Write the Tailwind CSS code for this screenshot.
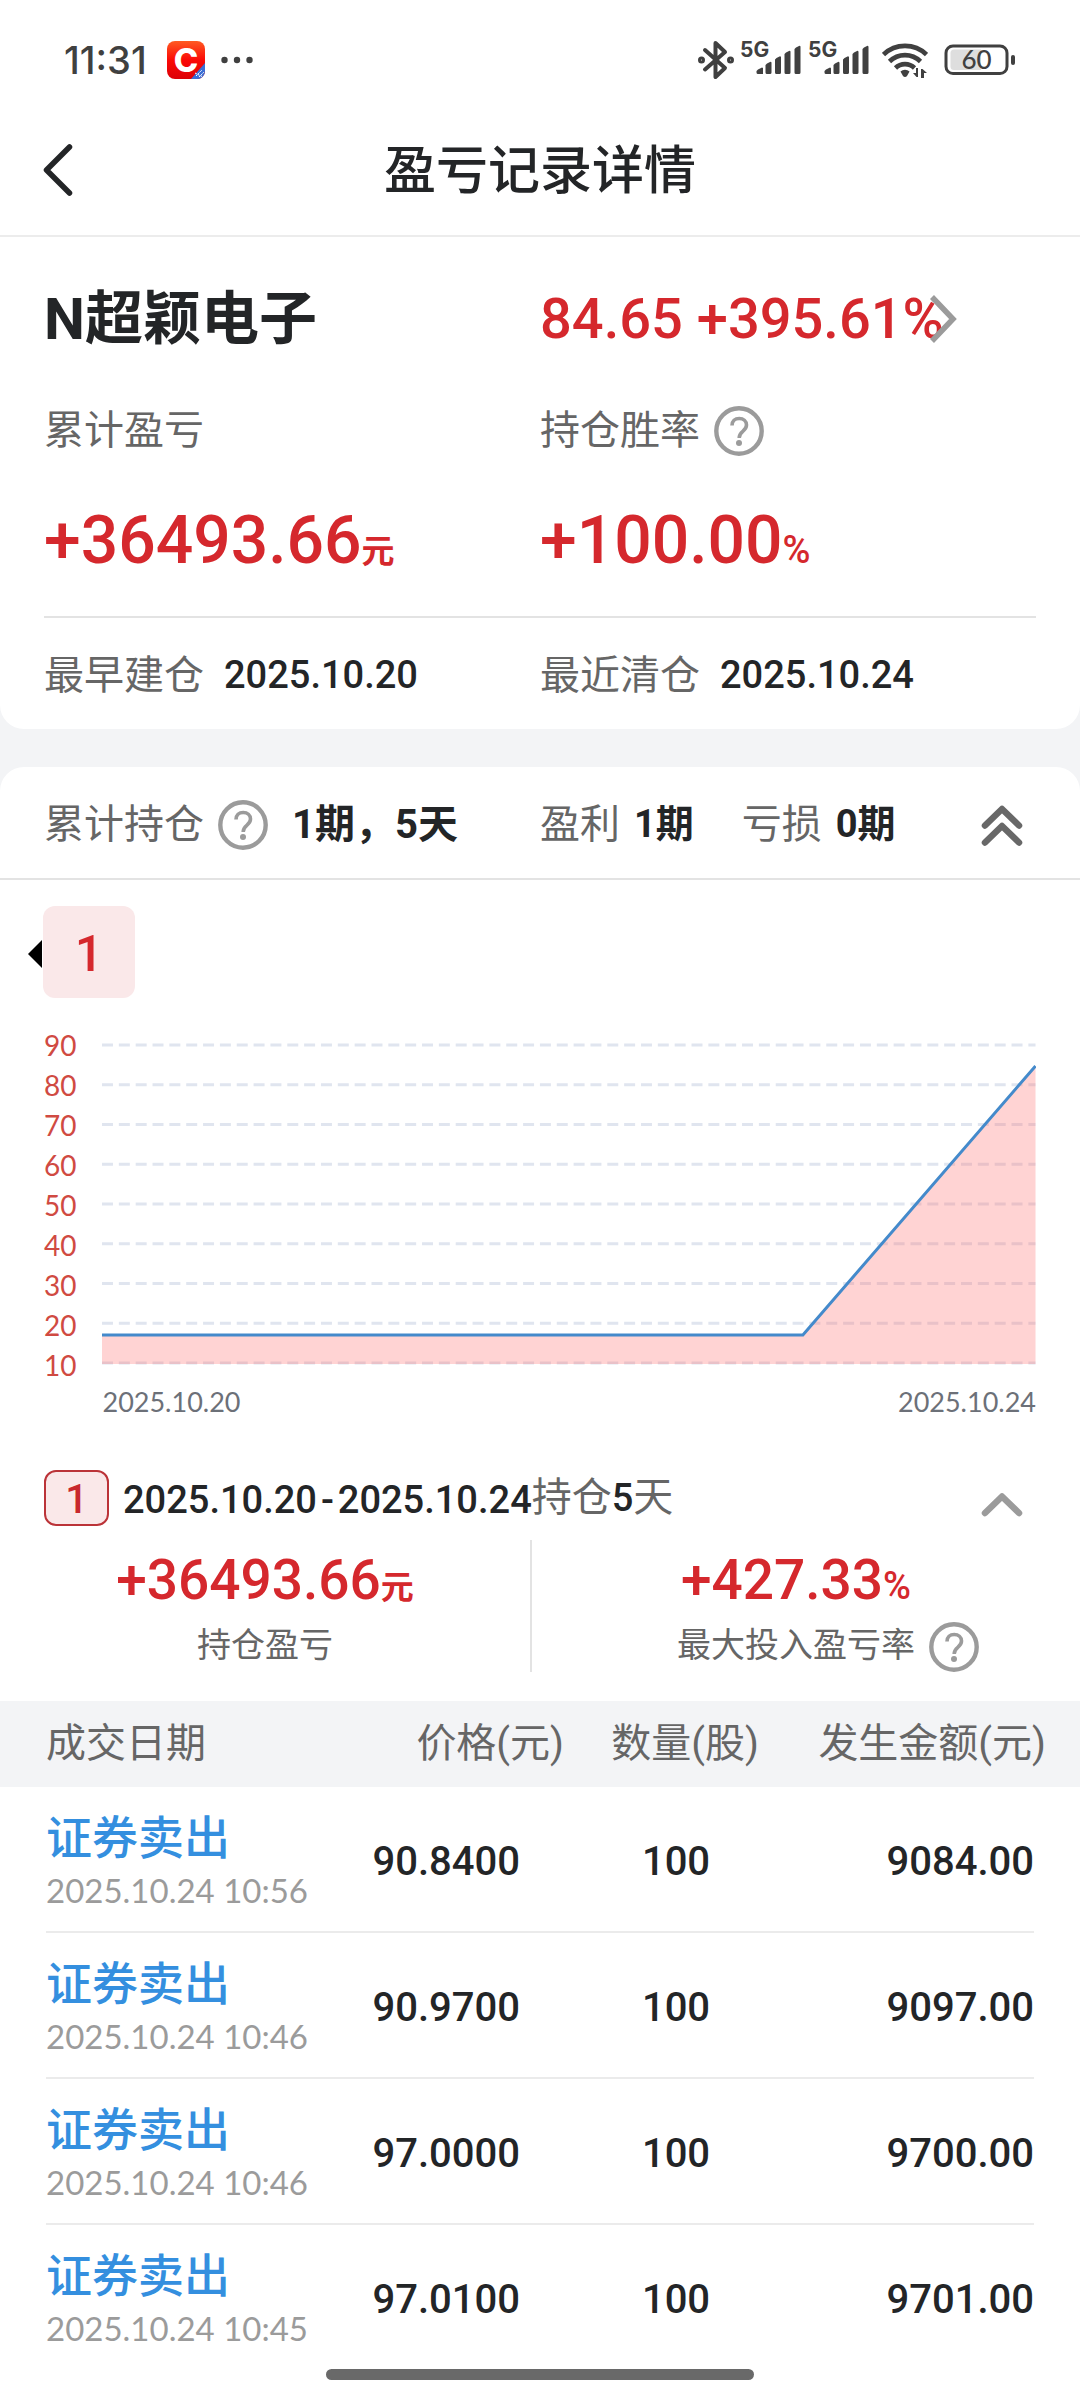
<!DOCTYPE html>
<html lang="zh-CN">
<head>
  <meta charset="UTF-8" />
  <meta name="viewport" content="width=device-width, initial-scale=1.0" />
  <title>盈亏记录详情</title>
  <script src="https://cdn.jsdelivr.net/npm/@tailwindcss/browser@4"></script>
</head>
<body class="bg-[#f3f4f6] font-['Roboto','Noto_Sans_CJK_SC',sans-serif] text-[#232527] whitespace-nowrap">
  <svg class="hidden">
    <symbol id="help" viewBox="0 0 50 50">
      <circle cx="25" cy="25" r="22.7" fill="none" stroke="#9b9b9b" stroke-width="4.4" />
      <path d="M18 19.500c0-4.300 3-7 7.200-7s7.300 2.700 7.300 6.600c0 3-1.600 4.500-3.700 6.200-2.400 1.900-3.600 3.200-3.600 6.700" fill="none" stroke="#9b9b9b" stroke-width="3.600" />
      <circle cx="25" cy="37" r="3" fill="#9b9b9b" />
    </symbol>
    <symbol id="signal" viewBox="0 0 46 30">
      <path d="M2 24.500l3.500-1.800a1 1 0 0 1 1.500 1V29H2a1.500 1.500 0 0 1-1.500-1.500V26zM11 18.500l3-1.500a1 1 0 0 1 1.500 1v9.500A1.500 1.500 0 0 1 14 29h-3a1.500 1.500 0 0 1-1.500-1.500V20zM20.500 13l3-1.500a1 1 0 0 1 1.500 1v15a1.500 1.500 0 0 1-1.500 1.500h-3a1.500 1.500 0 0 1-1.500-1.500v-13zM30 7.500L33 6a1 1 0 0 1 1.500 1v20.500A1.500 1.500 0 0 1 33 29h-3a1.500 1.500 0 0 1-1.500-1.500V9zM40 2.500L43 1a1 1 0 0 1 1.500 1v25.500A1.500 1.500 0 0 1 43 29h-3a1.500 1.500 0 0 1-1.500-1.500V4z" fill="#404040" />
    </symbol>
  </svg>

  <div class="bg-white rounded-b-3xl">
    <!-- status bar -->
    <div class="h-[104px] pt-4 pl-16 pr-16 flex items-center justify-between text-[#404040]">
      <div class="flex items-center">
        <span class="font-['Inter'] text-[38px] font-medium">11:31</span>
        <svg class="ml-5 w-[38px] h-[38px]" viewBox="0 0 38 38">
          <defs>
            <linearGradient id="app" x1="0" y1="0" x2="0" y2="1">
              <stop offset="0" stop-color="#ff5a22" /><stop offset=".5" stop-color="#fb0a06" /><stop offset="1" stop-color="#dc0008" />
            </linearGradient>
            <clipPath id="appClip"><rect width="38" height="38" rx="8" /></clipPath>
          </defs>
          <g clip-path="url(#appClip)">
            <rect width="38" height="38" fill="url(#app)" />
            <path d="M38 22L24 38h14z" fill="#3b6fd6" />
            <path d="M29 35l6-6M32 36l5-5M28 32l8 4" stroke="#fff" stroke-dasharray="2 1" />
            <text x="19" y="31" text-anchor="middle" font-family="Inter" font-weight="800" font-size="33" fill="#fff">C</text>
          </g>
        </svg>
        <svg class="ml-4 w-8 h-2" viewBox="0 0 32 8" fill="#404040"><circle cx="3.500" cy="4" r="3.200" /><circle cx="16" cy="4" r="3.200" /><circle cx="28.500" cy="4" r="3.200" /></svg>
      </div>
      <div class="flex items-center">
        <svg class="w-9 h-10" viewBox="0 0 36 40" fill="none" stroke="#404040" stroke-width="4" stroke-linejoin="round" stroke-linecap="round">
          <path d="M7 10l20 18-9.500 9V3L27 12 7 29.500" />
          <circle cx="3.500" cy="20" r="1.500" /><circle cx="32.500" cy="20" r="1.500" />
        </svg>
        <span class="ml-1.5 -mt-5 w-4 font-['Inter'] text-[21px] leading-5 font-bold">5G</span>
        <svg class="w-[46px] h-[30px]"><use href="#signal" /></svg>
        <span class="ml-1.5 -mt-5 w-4 font-['Inter'] text-[21px] leading-5 font-bold">5G</span>
        <svg class="w-[46px] h-[30px]"><use href="#signal" /></svg>
        <svg class="ml-3 w-[46px] h-9" viewBox="0 0 46 36">
          <g fill="none" stroke="#404040" stroke-width="4.600">
            <path d="M1.500 12.500a31 31 0 0 1 43 0M7.500 19.500a22 22 0 0 1 31 0M13.500 26a13.500 13.500 0 0 1 19 0" />
          </g>
          <path d="M18.500 29.500a6.500 6.500 0 0 1 9 0l-2.500 4.500a2.500 2.500 0 0 1-4 0z" fill="#404040" />
          <path d="M36 26v9h-1.500l-3.500-4h3v-5zM39 36v-9h1.500l4.500 4h-3v5z" fill="#404040" />
        </svg>
        <svg class="ml-4 w-[72px] h-8" viewBox="0 0 72 32">
          <rect x="2" y="2" width="61" height="27.500" rx="7" fill="#fff" stroke="#404040" stroke-width="3" />
          <path d="M10 5.500h27v20.500H10a3.500 3.500 0 0 1-3.500-3.500V9A3.500 3.500 0 0 1 10 5.500z" fill="#dedede" />
          <rect x="67" y="11" width="4" height="10" rx="2" fill="#404040" />
          <text x="32.500" y="25" text-anchor="middle" font-family="Lato" font-weight="500" font-size="26" fill="#404040">60</text>
        </svg>
      </div>
    </div>

    <header class="relative h-[133px] border-b-2 border-[#ececec] flex items-center justify-center">
      <button class="absolute left-9 p-1" aria-label="返回">
        <svg class="w-9 h-14" viewBox="0 0 36 56" fill="none" stroke="#232527" stroke-width="5.500" stroke-linecap="round" stroke-linejoin="round"><path d="M29.500 5L6.500 28l23 23" /></svg>
      </button>
      <h1 class="pt-1 text-[52px] font-medium">盈亏记录详情</h1>
    </header>

    <section class="px-11 pt-5">
      <div class="grid grid-cols-2 h-[120px] pt-1 items-center">
        <h2 class="text-[58px] font-bold">N超颖电子</h2>
        <a href="#" class="flex items-center text-[56px] font-medium text-[#d5282d]">84.65 +395.61%
          <svg class="-ml-4 w-8 h-12" viewBox="0 0 32 48" fill="none" stroke="#9b9b9b" stroke-width="5.500"><path d="M4 2l21 22L4 46" /></svg>
        </a>
      </div>
      <div class="grid grid-cols-2 h-[108px] items-center text-[40px] text-[#666]">
        <span>累计盈亏</span>
        <span class="flex items-center gap-3.5">持仓胜率
          <button aria-label="持仓胜率说明"><svg class="block size-[50px]"><use href="#help" /></svg></button>
        </span>
      </div>
      <div class="grid grid-cols-2 h-[106px] pt-1 items-center text-[66px] font-medium text-[#d5282d]">
        <p>+36493.66<span class="text-[33px] font-bold">元</span></p>
        <p>+100.00<span class="text-[38px]">%</span></p>
      </div>
      <div class="grid grid-cols-2 mt-[25px] h-[113px] pt-1 items-center border-t-2 border-[#e3e3e3]">
        <p class="flex items-center gap-5"><span class="text-[40px] text-[#666]">最早建仓</span><span class="text-[38px] font-medium">2025.10.20</span></p>
        <p class="flex items-center gap-5"><span class="text-[40px] text-[#666]">最近清仓</span><span class="text-[38px] font-medium">2025.10.24</span></p>
      </div>
    </section>
  </div>

  <div class="mt-[38px] bg-white rounded-t-3xl pb-[30px]">
    <div class="h-[113px] px-11 pt-1 border-b-2 border-[#e3e3e3] grid grid-cols-2 items-center text-[40px] text-[#666]">
      <div class="flex items-center">累计持仓
        <button class="ml-3.5" aria-label="累计持仓说明"><svg class="block size-[50px]"><use href="#help" /></svg></button>
        <b class="ml-6 font-bold text-[#232527]">1期，5天</b>
      </div>
      <div class="flex items-center">
        <span>盈利</span><b class="ml-3.5 text-[38px] text-[#232527]">1期</b>
        <span class="ml-12">亏损</span><b class="ml-3.5 text-[38px] text-[#232527]">0期</b>
        <button class="ml-auto mr-3" aria-label="全部收起">
          <svg class="block w-[44px] h-[44px]" viewBox="0 0 44 44" fill="none" stroke="#686868" stroke-width="6.500" stroke-linecap="round" stroke-linejoin="round"><path d="M5 22.500L22 6l17 16.500M5 39.500L22 23l17 16.500" /></svg>
        </button>
      </div>
    </div>

    <div class="mt-[26px] pl-7 flex items-center">
      <svg class="w-[15px] h-7 mt-1" viewBox="0 0 15 28"><path d="M0 14L14 0v28z" /></svg>
      <button class="w-[92px] h-[92px] pt-1 rounded-xl bg-[#fae8e9] text-[50px] font-medium text-[#d5282d]">1</button>
    </div>

    <!-- price chart -->
    <div class="mt-7 px-11 flex gap-[26px]">
      <div class="h-[358px] flex flex-col justify-between text-right font-['Lato'] text-[28px] leading-[38px] text-[#d04a42]">
        <span>90</span><span>80</span><span>70</span><span>60</span><span>50</span><span>40</span><span>30</span><span>20</span><span>10</span>
      </div>
      <div class="flex-1">
        <svg class="block w-full h-[358px]" viewBox="0 0 935 358" preserveAspectRatio="none">
          <path d="M0 19H935M0 58.750H935M0 98.500H935M0 138.250H935M0 178H935M0 217.750H935M0 257.500H935M0 297.250H935M0 337H935" stroke="#e0e5ef" stroke-width="3" stroke-dasharray="11 5.870" />
          <path d="M0 309H702L935 40V338H0z" fill="#ff6e6e" fill-opacity=".3" />
          <path d="M0 309H702L935 40" fill="none" stroke="#448acb" stroke-width="3" />
        </svg>
        <div class="h-9 flex justify-between items-center font-['Lato'] text-[27px] text-[#6c7078]">
          <span>2025.10.20</span><span>2025.10.24</span>
        </div>
      </div>
    </div>

    <div class="mt-12 h-[60px] px-11 flex items-center text-[38px]">
      <span class="w-[65px] h-[56px] pt-1 rounded-xl border-2 border-[#bb3338] bg-[#fae8e9] flex items-center justify-center text-[40px] font-medium text-[#c8282d]">1</span>
      <span class="ml-3.5 pt-1 font-medium">2025.10.20<span class="px-1">-</span>2025.10.24</span>
      <span class="text-[40px] text-[#666]">持仓<b class="font-medium text-[38px] text-[#232527]">5</b>天</span>
      <button class="ml-auto mr-3 mt-3.5" aria-label="收起">
        <svg class="block w-[44px] h-7" viewBox="0 0 44 28" fill="none" stroke="#9b9b9b" stroke-width="6.500" stroke-linecap="round" stroke-linejoin="round"><path d="M5 22L22 5.500 39 22" /></svg>
      </button>
    </div>

    <div class="mt-3 grid grid-cols-[532fr_548fr] h-[132px] text-center">
      <div class="border-r-2 border-[#e3e3e3]">
        <p class="h-[80px] leading-[80px] text-[55px] font-medium text-[#d5282d]">+36493.66<span class="text-[33px] font-bold">元</span></p>
        <p class="h-[50px] leading-[50px] text-[34px] text-[#666]">持仓盈亏</p>
      </div>
      <div class="flex justify-center items-end pl-11 gap-3.5">
        <div class="h-full">
          <p class="h-[80px] leading-[80px] text-[55px] font-medium text-[#d5282d]">+427.33<span class="text-[38px]">%</span></p>
          <p class="h-[50px] leading-[50px] text-[34px] text-[#666]">最大投入盈亏率</p>
        </div>
        <button aria-label="最大投入盈亏率说明"><svg class="block size-[50px]"><use href="#help" /></svg></button>
      </div>
    </div>

    <table class="block mt-[29px]">
      <thead class="block bg-[#f3f4f6] text-[40px] text-[#666]">
        <tr class="h-[86px] pl-[46px] pr-[34px] grid grid-cols-[300fr_218fr_242fr_240fr] items-center">
          <th class="font-normal text-left">成交日期</th>
          <th class="font-normal text-right">价格(元)</th>
          <th class="font-normal text-center">数量(股)</th>
          <th class="font-normal text-right">发生金额(元)</th>
        </tr>
      </thead>
      <tbody id="trades" class="block px-[46px]"></tbody>
    </table>
  </div>

  <div class="fixed bottom-5 left-1/2 -translate-x-1/2 w-[428px] h-[11px] rounded-full bg-[#696969]"></div>

  <script>
    const trades = [
      { type: "证券卖出", time: "2025.10.24 10:56", price: "90.8400", qty: 100, amount: "9084.00" },
      { type: "证券卖出", time: "2025.10.24 10:46", price: "90.9700", qty: 100, amount: "9097.00" },
      { type: "证券卖出", time: "2025.10.24 10:46", price: "97.0000", qty: 100, amount: "9700.00" },
      { type: "证券卖出", time: "2025.10.24 10:45", price: "97.0100", qty: 100, amount: "9701.00" }
    ];

    function renderRow(t) {
      return `
        <tr class="h-[146px] pt-1.5 grid grid-cols-[300fr_174fr_312fr_202fr] items-center border-b-2 border-[#ebebeb] last:border-transparent text-[40px] font-medium">
          <td>
            <p class="text-[46px] leading-[56px] text-[#348fdf]">${t.type}</p>
            <p class="font-['Lato'] text-[33px] leading-[48px] font-normal text-[#9b9b9b]">${t.time}</p>
          </td>
          <td class="text-right">${t.price}</td>
          <td class="text-center">${t.qty}</td>
          <td class="text-right">${t.amount}</td>
        </tr>
      `;
    }

    document.getElementById("trades").innerHTML = trades.map(renderRow).join("");
  </script>
</body>
</html>
